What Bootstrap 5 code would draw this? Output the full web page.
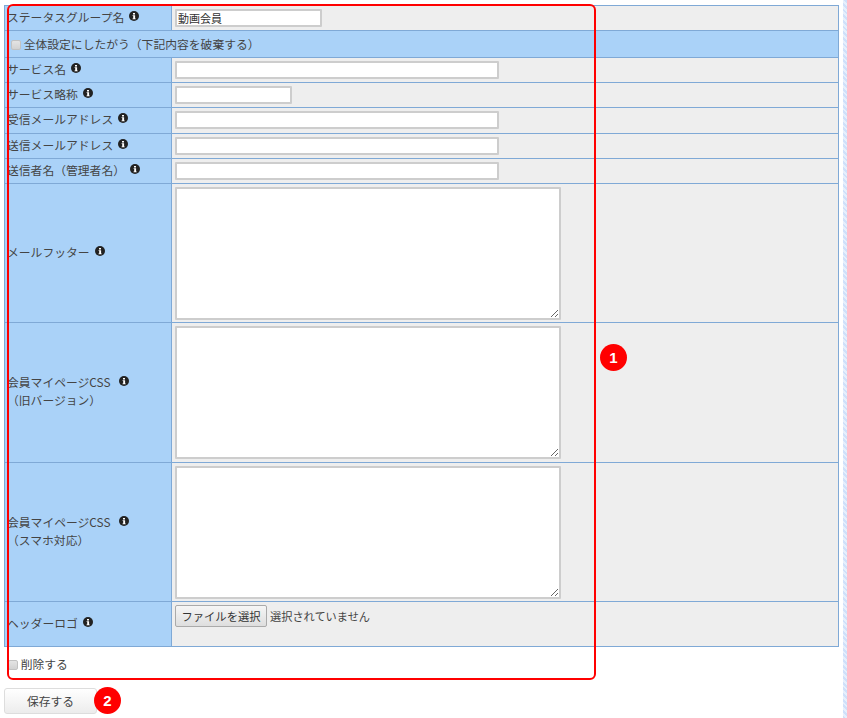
<!DOCTYPE html>
<html lang="ja">
<head>
<meta charset="utf-8">
<title>ステータスグループ</title>
<link href="https://cdn.jsdelivr.net/npm/bootstrap@5.3.0/dist/css/bootstrap.min.css" rel="stylesheet">
<style>
html, body { height: 718px; overflow: hidden; }
body { font-family: "Noto Sans CJK JP", "Noto Sans", sans-serif; font-size: 11.8px; color: #444; background: #fff; }
.page-wrap { position: relative; height: 718px; padding: 5px 8px 0 4px; }
.edge-strip { position: absolute; top: 0; right: 0; bottom: 0; width: 4px; background: repeating-linear-gradient(45deg, #cfe0fa 0 2px, #e6effc 2px 4px); }
.set-table { width: 835px; table-layout: fixed; margin: 0; border-collapse: collapse; color: #444; }
.set-table > tbody > tr > th, .set-table > tbody > tr > td {
  padding: 0 0 0 2px; border: 1px solid #7fa9d6; font-weight: 400; box-shadow: none; color: #444; vertical-align: middle; line-height: 18px;
}
.set-table > tbody > tr > th { background: #aad2f8; padding-bottom: 3px; }
.set-table > tbody > tr > td { background: #eee; padding-left: 3px; padding-bottom: 1px; }
.set-table > tbody > tr > td.wide-head { background: #aad2f8; padding-left: 6px; padding-bottom: 0; }
.set-table > tbody > tr > td.area-cell { vertical-align: top; padding-top: 3px; }
.set-table > tbody > tr > td.file-cell { vertical-align: top; padding-bottom: 0; }
.set-table col.head-col { width: 167px; }
.h-25px { height: 25px; }
.h-26px { height: 26px; }
.h-27px { height: 27px; }
.h-139px { height: 139px; }
.h-140px { height: 140px; }
.h-45px { height: 45px; }
.fld { display: block; height: 18px; padding: 0 1px; border: 2px solid #cdcdcd; border-radius: 1px; background: #fff; font-size: 11px; line-height: 14px; color: #333; box-shadow: none; }
.fld-name { width: 147px; }
.fld-short { width: 117px; }
.fld-long { width: 324px; }
.fld-area { display: block; width: 386px; height: 133px; padding: 0; margin: 0; border: 2px solid #cdcdcd; border-radius: 1px; background: #fff; resize: both; }
.file-row { height: 44px; padding-top: 3px; }
.file-btn { height: 22px; width: 92px; padding: 0; font-size: 11.3px; line-height: 20px; color: #333; background: linear-gradient(#f6f6f6, #dedede); border: 1px solid #aaa; border-radius: 2px; }
.file-note { margin-left: 3px; margin-top: 2px; font-size: 11.2px; }
.info-ic { width: 10px; height: 10px; display: inline-block; vertical-align: 1px; margin-left: 2.5px; }
.info-wide { margin-left: 6px; }
.chk { appearance: none; display: inline-block; width: 10px; height: 10px; margin: 0; vertical-align: -1px; background: linear-gradient(#e4e4e4, #d2d2d2); border: 1px solid #c2c2c2; border-radius: 2px; }
.del-row { height: 41px; padding: 8px 0 0 4px; line-height: 17px; }
.save-btn { display: block; width: 93px; height: 26px; margin-top: 0; padding: 0; font-size: 11.8px; color: #444; background: linear-gradient(#fff, #ececec); border: 1px solid #ddd; border-radius: 3px; }
.red-frame { position: absolute; left: 7px; top: 4px; width: 589px; height: 676px; border: 2px solid #f00; border-radius: 6px; pointer-events: none; }
.num-pin { position: absolute; width: 27px; height: 27px; border-radius: 50%; background: #f00; color: #fff; font: 700 15px/27px "Liberation Sans", sans-serif; text-align: center; }
.pin-one { left: 600px; top: 344px; }
.pin-two { left: 94px; top: 687px; }
</style>
</head>
<body>
<svg width="0" height="0" class="d-block position-absolute">
  <defs>
    <symbol id="info" viewBox="0 0 10 10">
      <circle cx="5" cy="5" r="5" fill="#222"/>
      <path d="M4 2h2v1.4H4zM3.6 4.2h2.5v3.2h.6v.9H3.5v-.9h.7V5.1h-.6z" fill="#fff"/>
    </symbol>
  </defs>
</svg>
<div class="page-wrap">
  <form>
    <table class="table set-table">
      <colgroup><col class="head-col"><col></colgroup>
      <tbody>
        <tr class="h-25px"><th>ステータスグループ名 <svg class="info-ic"><use href="#info"/></svg></th><td><input class="fld fld-name" value="動画会員"></td></tr>
        <tr class="h-27px"><td class="wide-head" colspan="2"><input class="chk" type="checkbox"> 全体設定にしたがう（下記内容を破棄する）</td></tr>
        <tr class="h-25px"><th>サービス名 <svg class="info-ic"><use href="#info"/></svg></th><td><input class="fld fld-long"></td></tr>
        <tr class="h-25px"><th>サービス略称 <svg class="info-ic"><use href="#info"/></svg></th><td><input class="fld fld-short"></td></tr>
        <tr class="h-26px"><th>受信メールアドレス <svg class="info-ic"><use href="#info"/></svg></th><td><input class="fld fld-long"></td></tr>
        <tr class="h-25px"><th>送信メールアドレス <svg class="info-ic"><use href="#info"/></svg></th><td><input class="fld fld-long"></td></tr>
        <tr class="h-25px"><th>送信者名（管理者名） <svg class="info-ic"><use href="#info"/></svg></th><td><input class="fld fld-long"></td></tr>
        <tr class="h-139px"><th>メールフッター <svg class="info-ic"><use href="#info"/></svg></th><td class="area-cell"><textarea class="fld-area"></textarea></td></tr>
        <tr class="h-140px"><th>会員マイページCSS <svg class="info-ic info-wide"><use href="#info"/></svg><br>（旧バージョン）</th><td class="area-cell"><textarea class="fld-area"></textarea></td></tr>
        <tr class="h-139px"><th>会員マイページCSS <svg class="info-ic info-wide"><use href="#info"/></svg><br>（スマホ対応）</th><td class="area-cell"><textarea class="fld-area"></textarea></td></tr>
        <tr class="h-45px"><th>ヘッダーロゴ <svg class="info-ic"><use href="#info"/></svg></th><td class="file-cell"><div class="file-row d-flex align-items-start"><button type="button" class="file-btn">ファイルを選択</button><span class="file-note">選択されていません</span></div></td></tr>
      </tbody>
    </table>
    <div class="del-row"><input class="chk" type="checkbox"> 削除する</div>
    <button type="button" class="save-btn">保存する</button>
  </form>
  <div class="red-frame"></div>
  <div class="num-pin pin-one">1</div>
  <div class="num-pin pin-two">2</div>
  <div class="edge-strip"></div>
</div>
<script src="https://cdn.jsdelivr.net/npm/bootstrap@5.3.0/dist/js/bootstrap.bundle.min.js"></script>
</body>
</html>
